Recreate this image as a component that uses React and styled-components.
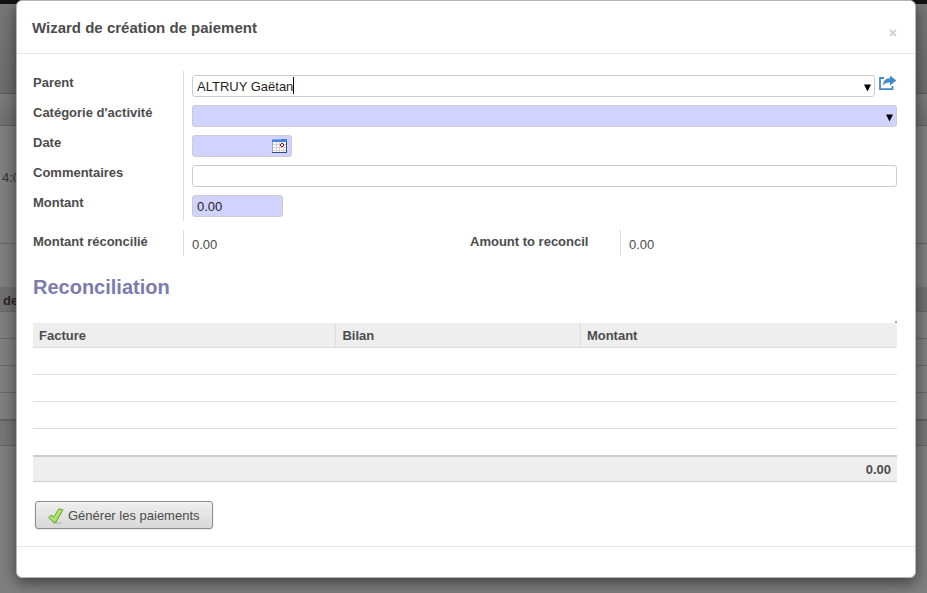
import React, { useState } from "react";
import styled, { createGlobalStyle, css } from "styled-components";

const GlobalStyle = createGlobalStyle`
  * { box-sizing: border-box; }
  body {
    margin: 0;
    background: #7f7f7f;
    color: #4c4c4c;
    font: 13px/22px "Liberation Sans", Arial, sans-serif;
  }
`;

const Screen = styled.div`
  position: relative;
  min-height: 100vh;
  overflow: hidden;
`;

const Backdrop = styled.div`
  position: absolute;
  inset: 0;
  overflow: hidden;
`;

const bands = {
  nav: css`height: 4px; background: #111;`,
  header: css`height: 90px; background: linear-gradient(#777, #6c6c6c); border-bottom: 1px solid #595959;`,
  status: css`height: 32px; background: linear-gradient(#7d7d7d, #6f6f6f); border-bottom: 1px solid #606060;`,
  sheet: css`height: 118px; padding: 41px 2px; border-bottom: 1px solid #666;`,
  gap: css`height: 43px;`,
  columns: css`height: 25px; padding: 3px 3px 0; background: #717171; color: #262626; font-weight: bold; border-bottom: 1px solid #666;`,
  line: css`height: 27px; border-bottom: 1px solid #696969;`,
  lastLine: css`height: 28px; border-bottom: 2px solid #646464;`,
  total: css`height: 25px; background: #767676; border-bottom: 1px solid #646464;`,
};

const Band = styled.div`
  color: #333;
  ${(p) => bands[p.$kind]}
`;

const Dialog = styled.section`
  position: relative;
  margin: 0 11px 0 16px;
  background: #fff;
  border: 1px solid #b5b5b5;
  border-radius: 6px;
  box-shadow: 0 5px 15px rgba(0, 0, 0, 0.5);
`;

const DialogHeader = styled.header`
  display: flex;
  align-items: center;
  justify-content: space-between;
  height: 53px;
  padding: 0 18px 0 15px;
  border-bottom: 1px solid #e5e5e5;
`;

const Title = styled.h1`
  margin: 0;
  padding-top: 2px;
  font-size: 15px;
  line-height: 20px;
`;

const Close = styled.button`
  display: flex;
  margin-top: 12px;
  padding: 0;
  border: 0;
  background: none;
  color: #d2d2d2;
`;

const Body = styled.div`
  padding: 17px 18px 17px 16px;
`;

const Fields = styled.div`
  display: grid;
  grid-template-columns: 150px 1fr;
  grid-auto-rows: 30px;
`;

const Label = styled.label`
  font-weight: bold;
  line-height: 24px;
`;

const Cell = styled.div`
  display: flex;
  align-items: flex-start;
  gap: 4px;
  padding: 4px 0 4px 8px;
  border-left: 1px solid #ddd;
`;

const Control = styled.div`
  position: relative;
  display: flex;
  ${(p) => (p.$width ? `width: ${p.$width}px;` : "flex: 1;")}
`;

const field = css`
  width: 100%;
  height: 22px;
  margin: 0;
  padding: 2px 4px 0;
  border: 1px solid #ccc;
  border-radius: 3px;
  background: ${(p) => (p.$required ? "#d2d2ff" : "#fff")};
  color: #1f1f1f;
  font: inherit;
  outline: 0;
`;

const Input = styled.input`${field}`;
const Select = styled.select`
  ${field}
  appearance: none;
`;

const Caret = styled.span`
  position: absolute;
  top: 2px;
  left: 101px;
  width: 1px;
  height: 17px;
  background: #000;
`;

const Adornment = styled.span`
  position: absolute;
  top: 0;
  right: 4px;
  display: flex;
  align-items: center;
  height: 26px;
  pointer-events: none;
`;

const IconButton = styled.button`
  display: flex;
  padding: 0;
  border: 0;
  background: none;
`;

const CalendarButton = styled(IconButton)`
  position: absolute;
  top: 4px;
  right: 5px;
`;

const Amounts = styled.div`
  display: grid;
  grid-template-columns: 437fr 427fr;
  margin-top: 9px;
`;

const Amount = styled.div`
  display: grid;
  grid-template-columns: 150px 1fr;
  grid-template-rows: 26px;
`;

const Value = styled.output`
  padding: 3px 0 0 8px;
  border-left: 1px solid #ddd;
  line-height: 23px;
`;

const Heading = styled.h2`
  margin: 20px 0 22px;
  color: #7c7bad;
  font-size: 20px;
  line-height: 23px;
`;

const ResizeMark = styled.div`
  width: 2px;
  height: 2px;
  margin-left: auto;
  background: #aaa;
`;

const Table = styled.table`
  width: 100%;
  table-layout: fixed;
  border-collapse: separate;
  border-spacing: 0;
`;

const Col = styled.col`
  width: ${(p) => p.$width};
`;

const Th = styled.th`
  height: 25px;
  padding: 2px 6px 0;
  background: #eee;
  border-bottom: 1px solid #ddd;
  text-align: left;
  & + & { border-left: 1px solid #ddd; }
`;

const Td = styled.td`
  height: 27px;
  padding: 0;
  border-bottom: 1px solid #ddd;
  tr:last-child > & { height: 26px; border-bottom: 0; }
`;

const Total = styled.td`
  height: 27px;
  padding: 2px 6px 0;
  background: #eee;
  border-top: 2px solid #ccc;
  border-bottom: 1px solid #ccc;
  font-weight: bold;
  text-align: right;
`;

const Generate = styled.button`
  display: flex;
  align-items: center;
  gap: 4px;
  height: 28px;
  margin: 19px 0 0 2px;
  padding: 2px 12px 0;
  border: 1px solid #8a8a8a;
  border-radius: 3px;
  background: linear-gradient(#efefef, #d8d8d8);
  box-shadow: 0 1px 2px rgba(0, 0, 0, 0.1), inset 0 1px 0 #f8f8f8;
  color: #4c4c4c;
  font: inherit;
`;

const DialogFooter = styled.footer`
  height: 31px;
  border-top: 1px solid #e5e5e5;
`;

const Arrow = () => (
  <svg width="7" height="8" viewBox="0 0 7 8" aria-hidden="true">
    <path d="M0 .5h7L3.5 7.5z" fill="#000" />
  </svg>
);

const CloseIcon = () => (
  <svg width="8" height="8" viewBox="0 0 8 8" aria-hidden="true">
    <path d="M1 1l6 6M7 1L1 7" stroke="currentColor" strokeWidth="2" />
  </svg>
);

const OpenIcon = () => (
  <svg width="18" height="16" viewBox="0 0 18 16" aria-hidden="true">
    <path d="M5 3H1v11.2h12.5V11" fill="none" stroke="#428bca" strokeWidth="1.8" />
    <path d="M4.2 10.4C4.2 5.8 6.6 3.3 11 3.3V.5L17.4 5.5l-6.4 5V7.6C8 7.5 6 8 4.2 10.4z" fill="#428bca" />
  </svg>
);

const CalendarIcon = () => (
  <svg width="15" height="14" viewBox="0 0 15 14" shapeRendering="crispEdges" aria-hidden="true">
    <path d="M0 0h15v14H0z" fill="#9aa6c4" />
    <path d="M1 3h13v10H1z" fill="#fff" />
    <path d="M1 5.5h13M1 8.5h13M1 11.5h13M4.5 3v10M7.5 3v10M11.5 3v10" stroke="#d2d2d2" />
    <path d="M0 0h15v3H0z" fill="#4782e0" />
    <path d="M0 0h9v1H0z" fill="#7aaaf2" />
    <path d="M14 3h1v11H0v-1h14z" fill="#2f4d80" />
    <path d="M9 4h2v1h1v2h-1v1H9V7H8V5h1z" fill="#9c0610" />
    <path d="M9 5h2v2H9z" fill="#fff" />
  </svg>
);

const CheckIcon = () => (
  <svg width="16" height="16" viewBox="0 0 16 16" aria-hidden="true">
    <ellipse cx="9" cy="15" rx="5" ry="1" fill="#c2c2c2" />
    <path d="M.6 9.6L3.2 7l2.8 2L10.8.8l4.2.9-7 12.5-2.2.3z" fill="#a2e065" stroke="#6aa63e" strokeLinejoin="round" />
    <path d="M2.2 9.4l4 2.4 5.4-9.6" fill="none" stroke="#b9ee88" />
  </svg>
);

const backdropRows = [
  ["nav"], ["header"], ["status"], ["sheet", "4:00"], ["gap"], ["columns", "de"],
  ["line"], ["line"], ["line"], ["lastLine"], ["total"],
];

export default function App() {
  const [form, setForm] = useState({ parent: "ALTRUY Gaëtan", date: "", comments: "", amount: "0.00" });
  const bind = (name) => ({
    id: name,
    value: form[name],
    onChange: (e) => setForm({ ...form, [name]: e.target.value }),
  });

  return (
    <Screen>
      <GlobalStyle />
      <Backdrop aria-hidden="true">
        {backdropRows.map(([kind, text], i) => <Band key={i} $kind={kind}>{text}</Band>)}
      </Backdrop>
      <Dialog role="dialog" aria-labelledby="title">
        <DialogHeader>
          <Title id="title">Wizard de création de paiement</Title>
          <Close type="button" aria-label="Fermer"><CloseIcon /></Close>
        </DialogHeader>
        <Body>
          <Fields>
            <Label htmlFor="parent">Parent</Label>
            <Cell>
              <Control>
                <Input {...bind("parent")} />
                <Caret />
                <Adornment><Arrow /></Adornment>
              </Control>
              <IconButton type="button" aria-label="Ouvrir"><OpenIcon /></IconButton>
            </Cell>
            <Label htmlFor="category">Catégorie d'activité</Label>
            <Cell>
              <Control>
                <Select id="category" $required><option value="" /></Select>
                <Adornment><Arrow /></Adornment>
              </Control>
            </Cell>
            <Label htmlFor="date">Date</Label>
            <Cell>
              <Control $width={100}>
                <Input {...bind("date")} $required />
                <CalendarButton type="button" aria-label="Choisir une date"><CalendarIcon /></CalendarButton>
              </Control>
            </Cell>
            <Label htmlFor="comments">Commentaires</Label>
            <Cell><Control><Input {...bind("comments")} /></Control></Cell>
            <Label htmlFor="amount">Montant</Label>
            <Cell><Control $width={91}><Input {...bind("amount")} $required /></Control></Cell>
          </Fields>
          <Amounts>
            <Amount>
              <Label htmlFor="reconciled">Montant réconcilié</Label>
              <Value id="reconciled">0.00</Value>
            </Amount>
            <Amount>
              <Label htmlFor="remaining">Amount to reconcil</Label>
              <Value id="remaining">0.00</Value>
            </Amount>
          </Amounts>
          <Heading>Reconciliation</Heading>
          <ResizeMark />
          <Table>
            <colgroup><Col $width="35%" /><Col $width="28.3%" /><Col /></colgroup>
            <thead><tr><Th>Facture</Th><Th>Bilan</Th><Th>Montant</Th></tr></thead>
            <tbody>
              {[0, 1, 2, 3].map((row) => <tr key={row}><Td colSpan={3} /></tr>)}
            </tbody>
            <tfoot><tr><Total colSpan={3}>0.00</Total></tr></tfoot>
          </Table>
          <Generate type="button"><CheckIcon />Générer les paiements</Generate>
        </Body>
        <DialogFooter />
      </Dialog>
    </Screen>
  );
}
